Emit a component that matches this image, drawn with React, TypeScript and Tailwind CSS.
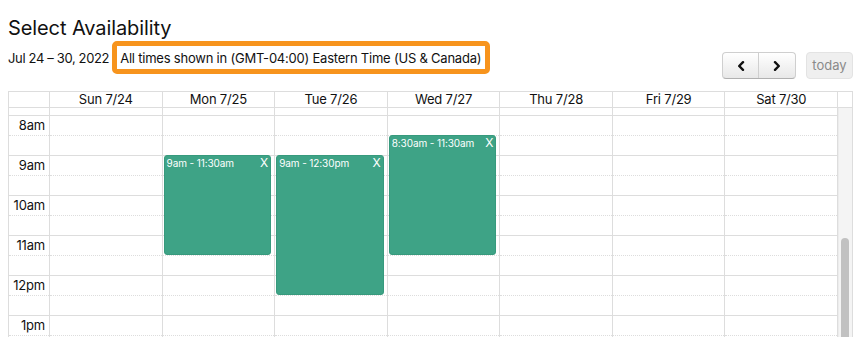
import React from "react";

const days = ["Sun 7/24", "Mon 7/25", "Tue 7/26", "Wed 7/27", "Thu 7/28", "Fri 7/29", "Sat 7/30"];
const hours = ["8am", "9am", "10am", "11am", "12pm", "1pm", "2pm"];

type Ev = { day: number; top: number; height: number; label: string };
const events: Ev[] = [
  { day: 1, top: 47, height: 100, label: "9am - 11:30am" },
  { day: 2, top: 47, height: 140, label: "9am - 12:30pm" },
  { day: 3, top: 27, height: 120, label: "8:30am - 11:30am" },
];

function Slots({ axis }: { axis?: boolean }) {
  return (
    <>
      <div className="h-[7px] shrink-0" />
      {hours.map((h) => (
        <React.Fragment key={h}>
          <div className="h-[20px] shrink-0 border-t border-[#dddddd] flex items-center justify-end pr-[4px] text-[13px] leading-none tracking-[-0.2px] text-[#111]">
            {axis ? h : null}
          </div>
          <div className="h-[20px] shrink-0 border-t border-dotted border-[#dddddd]" />
        </React.Fragment>
      ))}
    </>
  );
}

function Chevron({ dir }: { dir: "left" | "right" }) {
  return (
    <svg width="8" height="10" viewBox="0 0 8 10" className="block">
      <path
        d={dir === "left" ? "M6 1.2 L2.2 5 L6 8.8" : "M2 1.2 L5.8 5 L2 8.8"}
        fill="none"
        stroke="#111"
        strokeWidth="2.4"
        strokeLinecap="round"
        strokeLinejoin="round"
      />
    </svg>
  );
}

export default function App() {
  return (
    <div
      className="w-[864px] h-[337px] overflow-hidden bg-white pl-[8px] pr-[11px] text-[#111]"
      style={{ fontFamily: "Inter, 'Liberation Sans', sans-serif" }}
    >
      <div className="h-[41px] pt-[16px] text-[20px] leading-[24px] tracking-[-0.1px]">Select Availability</div>
      <div className="h-[50px] flex justify-between items-start">
        <div className="flex items-center">
          <span className="text-[13px] leading-[16px] mt-[0.5px] tracking-[-0.35px]">Jul 24 – 30, 2022</span>
          <div className="ml-[3px] h-[33px] border-[5px] border-[#f7941d] rounded-[5px] flex items-center pl-[3px] pr-[4px] text-[13px] leading-[16px] tracking-[-0.22px]">
            All times shown in (GMT-04:00) Eastern Time (US &amp; Canada)
          </div>
        </div>
        <div className="flex mt-[11px] gap-[10px]">
          <div className="flex h-[27px] rounded-[4px] border border-[#cfcfcf] border-b-[#b0b0b0] bg-gradient-to-b from-white to-[#e8e8e8] overflow-hidden">
            <div className="w-[36px] flex items-center justify-center border-r border-[#cfcfcf]">
              <Chevron dir="left" />
            </div>
            <div className="w-[36px] flex items-center justify-center">
              <Chevron dir="right" />
            </div>
          </div>
          <div className="h-[27px] w-[47px] rounded-[4px] border border-[#e3e3e3] bg-[#efefef] flex items-center justify-center text-[13px] text-[#8a8a8a]">
            today
          </div>
        </div>
      </div>
      <div className="border border-[#dddddd] border-b-0 h-[246px] flex flex-col">
        <div className="flex h-[16px] shrink-0 border-b border-[#dddddd] text-[13px] leading-[15px] tracking-[-0.2px]">
          <div className="w-[41px] shrink-0 border-r border-[#dddddd]" />
          {days.map((d) => (
            <div key={d} className="flex-1 border-r border-[#dddddd] text-center">
              {d}
            </div>
          ))}
          <div className="w-[14px] shrink-0" />
        </div>
        <div className="flex flex-1 overflow-hidden">
          <div className="w-[41px] shrink-0 border-r border-[#dddddd] flex flex-col">
            <Slots axis />
          </div>
          {days.map((d, i) => (
            <div key={d} className="flex-1 relative border-r border-[#dddddd] flex flex-col">
              <Slots />
              {events
                .filter((e) => e.day === i)
                .map((e) => (
                  <div
                    key={e.label}
                    className="absolute left-[1px] right-[3px] bg-[#3ea386] border border-[#379a7d] rounded-[3px] text-white flex justify-between items-start pl-[2px] pr-[2px]"
                    style={{ top: e.top, height: e.height }}
                  >
                    <span className="text-[10px] leading-[12px] mt-[1px] tracking-[-0.1px]">{e.label}</span>
                    <span className="text-[12px] leading-[12px] mt-[1px]">X</span>
                  </div>
                ))}
            </div>
          ))}
          <div className="w-[14px] shrink-0 bg-[#f4f4f4] border-l border-[#ececec] flex flex-col">
            <div className="h-[130px] shrink-0" />
            <div className="ml-[2px] w-[8px] flex-1 bg-[#c1c1c1] rounded-t-full" />
          </div>
        </div>
      </div>
    </div>
  );
}
